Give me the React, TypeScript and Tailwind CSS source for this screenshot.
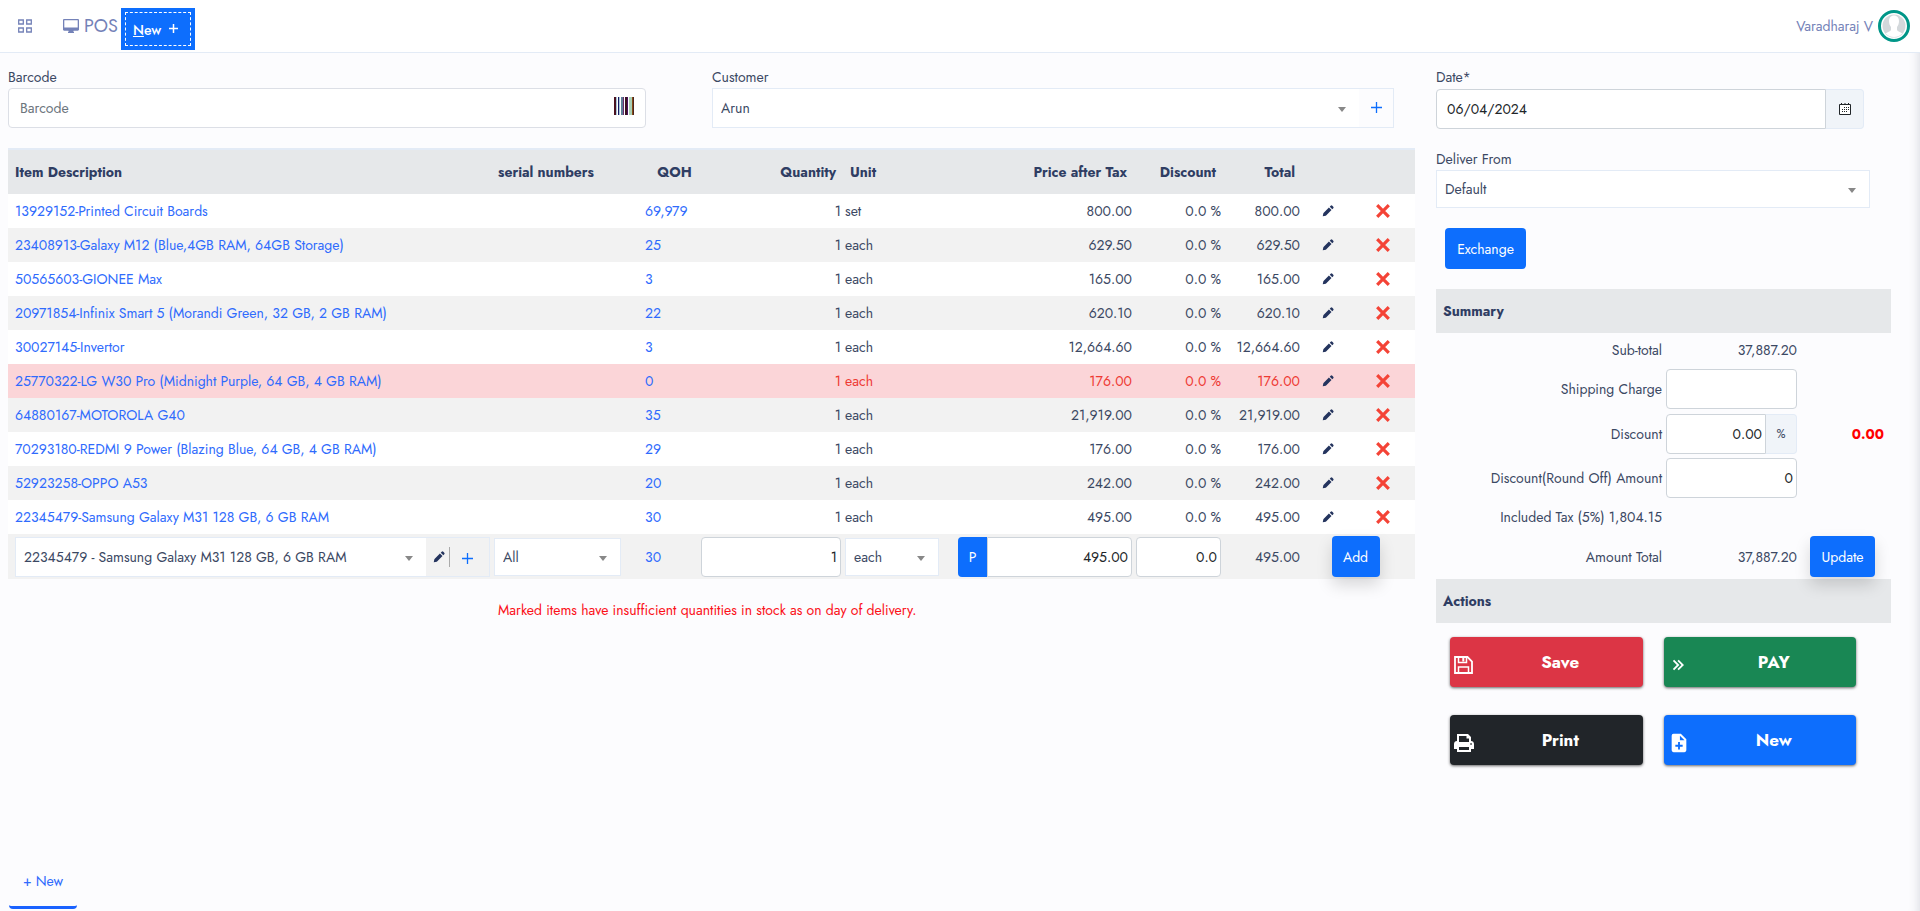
import type { ReactNode } from "react";
import { BiChevronsRight, BiSolidFilePlus, BiSolidPencil } from "react-icons/bi";

type Item = {
  name: string;
  qoh: string;
  unit: string;
  price: string;
  tone: "plain" | "stripe" | "short";
};

const items: Item[] = [
  { name: "13929152-Printed Circuit Boards", qoh: "69,979", unit: "set", price: "800.00", tone: "plain" },
  { name: "23408913-Galaxy M12 (Blue,4GB RAM, 64GB Storage)", qoh: "25", unit: "each", price: "629.50", tone: "stripe" },
  { name: "50565603-GIONEE Max", qoh: "3", unit: "each", price: "165.00", tone: "plain" },
  { name: "20971854-Infinix Smart 5 (Morandi Green, 32 GB, 2 GB RAM)", qoh: "22", unit: "each", price: "620.10", tone: "stripe" },
  { name: "30027145-Invertor", qoh: "3", unit: "each", price: "12,664.60", tone: "plain" },
  { name: "25770322-LG W30 Pro (Midnight Purple, 64 GB, 4 GB RAM)", qoh: "0", unit: "each", price: "176.00", tone: "short" },
  { name: "64880167-MOTOROLA G40", qoh: "35", unit: "each", price: "21,919.00", tone: "stripe" },
  { name: "70293180-REDMI 9 Power (Blazing Blue, 64 GB, 4 GB RAM)", qoh: "29", unit: "each", price: "176.00", tone: "plain" },
  { name: "52923258-OPPO A53", qoh: "20", unit: "each", price: "242.00", tone: "stripe" },
  { name: "22345479-Samsung Galaxy M31 128 GB, 6 GB RAM", qoh: "30", unit: "each", price: "495.00", tone: "plain" },
];

const rowTone = {
  plain: "bg-white",
  stripe: "bg-[#f2f2f2]",
  short: "bg-[#fbd5d8] text-[#ee3a33]",
};

const field = "h-10 min-w-0 border border-[#ced4da] bg-white text-[#212529] outline-none";

function Picker({ id, label, value, className }: { id: string; label?: string; value: string; className: string }) {
  return (
    <div className={`relative ${className}`}>
      <select
        id={id}
        aria-label={label}
        defaultValue={value}
        className="h-full w-full appearance-none bg-white pr-8 pl-2 outline-none"
      >
        <option>{value}</option>
      </select>
      <svg viewBox="0 0 8 5" className="pointer-events-none absolute top-1/2 right-[13px] -mt-px h-[5px] w-2 fill-[#888]">
        <path d="M0 0h8L4 5z" />
      </svg>
    </div>
  );
}

function PlusIcon() {
  return (
    <svg viewBox="0 0 11 11" className="size-[11px]" stroke="currentColor" strokeWidth="1.3" fill="none">
      <path d="M5.500 0v11M0 5.500h11" />
    </svg>
  );
}

function GridIcon() {
  return (
    <svg viewBox="0 0 14 14" className="size-3.5" stroke="currentColor" strokeWidth="1.3" fill="none">
      <path d="M.7 1h4.600v4H.7zM8.700 1h4.600v4H8.700zM.7 9h4.600v4H.7zM8.700 9h4.600v4H8.700z" />
    </svg>
  );
}

function MonitorIcon() {
  return (
    <svg viewBox="0 0 16 14" className="h-3.5 w-4">
      <path
        fill="currentColor"
        fillRule="evenodd"
        d="M1.200 0h13.600C15.500 0 16 .5 16 1.200v9.300c0 .7-.5 1.200-1.200 1.200H10.500V13h.5v1H5v-1h.5v-1.300H1.200C.5 11.700 0 11.200 0 10.500V1.200C0 .5.5 0 1.200 0zM1.300 1.200v7.300h13.400V1.200z"
      />
    </svg>
  );
}

function SaveIcon() {
  return (
    <svg viewBox="0 0 19 18" className="h-[18px] w-[19px]" stroke="currentColor" strokeWidth="1.800" fill="none">
      <path d="M1 1h12.500L18 5.500V17H1z" />
      <path d="M4.500 1v5.500h8V1M4.500 17v-6h10v6" strokeWidth="1.500" />
      <path d="M9.300 1.500v4" strokeWidth="2" />
    </svg>
  );
}

function PrinterIcon() {
  return (
    <svg viewBox="0 0 20 18" className="h-[18px] w-5">
      <path
        fill="currentColor"
        fillRule="evenodd"
        d="M3 0h11l3 3v4c1.700 0 3 1.300 3 3v5h-3v3H3v-3H0v-5c0-1.700 1.300-3 3-3zM5 2v6h10V4.500h-2.500V2zM5 13v3h10v-3zM16.300 9.200v1.500h1.500V9.200z"
      />
    </svg>
  );
}

function CrossIcon() {
  return (
    <svg viewBox="0 0 14 14" className="size-3.5" stroke="#f44336" strokeWidth="3.2" fill="none">
      <path d="M1.2 1.2l11.6 11.6M12.8 1.2L1.2 12.8" />
    </svg>
  );
}

function BarcodeIcon() {
  return (
    <svg viewBox="0 0 21 18" className="mb-1 h-[18px] w-[21px]" shapeRendering="crispEdges">
      <path fill="#4a1220" d="M0 0h2v18H0z" />
      <path fill="#151a66" d="M4 0h1v18H4z" />
      <path fill="#a9c4d4" d="M2 0h1v18H2zM5 0h1v18H5z" />
      <path fill="#5f7f98" d="M7 0h2v18H7z" />
      <path fill="#6a2a6a" d="M9 0h1v18H9z" />
      <path fill="#3a1020" d="M11 0h2v18h-2z" />
      <path fill="#4a1260" d="M13 0h1v18h-1z" />
      <path fill="#a9cfb5" d="M15 0h3v18h-3z" />
      <path fill="#8a4a14" d="M18 0h1v18h-1z" />
      <path fill="#4a2420" d="M19 0h1v18h-1z" />
    </svg>
  );
}

function CalendarIcon() {
  return (
    <svg viewBox="0 0 12 12" className="size-3" fill="#212529">
      <path d="M.5 1.5h11v10H.5z" fill="#fff" stroke="#212529" />
      <path d="M2 0h1v2H2zM5.500 0h1v2h-1zM9 0h1v2H9z" />
      <path d="M5 4h1v1H5zM7 4h1v1H7zM9 4h1v1H9zM3 6h1v1H3zM5 6h1v1H5zM7 6h1v1H7zM9 6h1v1H9zM3 8h1v1H3zM5 8h1v1H5zM7 8h1v1H7z" />
    </svg>
  );
}

function Avatar() {
  return (
    <svg viewBox="0 0 32 32" className="size-8">
      <circle cx="16" cy="16" r="14.5" fill="#fff" stroke="#009688" strokeWidth="3" />
      <circle cx="16" cy="16" r="11.500" fill="#d3d8db" />
      <path
        d="M16 5.500c3.200 0 5 2.300 5 5.600 0 2.600-.8 4.600-2 5.900v3c.6 1.500 3.500 2.300 5.300 3.400A11.500 11.500 0 0 1 7.700 23.400c1.800-1.100 4.700-1.900 5.300-3.400v-3c-1.200-1.300-2-3.300-2-5.900 0-3.300 1.800-5.600 5-5.600z"
        fill="#fff"
      />
    </svg>
  );
}

function PanelHeading({ children }: { children: ReactNode }) {
  return <h2 className="flex h-11 items-center bg-[#e6e8ea] px-[7px] font-bold text-[#2f3d63]">{children}</h2>;
}

function ActionButton({ icon, label, color }: { icon: ReactNode; label: string; color: string }) {
  return (
    <button className={`flex h-[50px] items-center rounded pl-1 text-white shadow-[0_1px_3px_rgba(0,0,0,0.6)] ${color}`}>
      <span className="flex w-6 shrink-0 justify-start pt-1.5 text-[22px]">{icon}</span>
      <span className="flex-1 text-[17px] font-bold">{label}</span>
    </button>
  );
}

export default function App() {
  return (
    <div className="flex min-h-screen flex-col bg-[#fcfcfe] font-['Jost','Lato',sans-serif] text-sm text-[#3b4863]">
      <header className="flex h-[53px] items-center border-b border-[#e3ebf6] bg-white pr-2.5 pl-[18px] text-[#7482b8]">
        <button aria-label="Menu">
          <GridIcon />
        </button>
        <div className="ml-[31px] flex items-center gap-[5px]">
          <MonitorIcon />
          <span className="text-lg">POS</span>
        </div>
        <button className="mt-1.5 ml-[3px] h-[42px] bg-[#0d6efd] p-1 text-white">
          <span className="flex h-full items-center gap-2 border border-dashed border-white pr-3 pl-[7px] font-medium">
            <span className="pt-0.5">
              <span className="underline">N</span>ew
            </span>
            <svg viewBox="0 0 9 9" className="mb-0.5 size-[9px]" stroke="currentColor" strokeWidth="1.500">
              <path d="M4.500 0v9M0 4.500h9" />
            </svg>
          </span>
        </button>
        <div className="ml-auto flex items-center gap-[5px]">
          <span>Varadharaj V</span>
          <Avatar />
        </div>
      </header>

      <div className="flex flex-1 shadow-[inset_-12px_0_12px_-12px_rgba(40,50,80,0.2)]">
        <main className="flex min-w-0 flex-1 flex-col pl-2">
          <div className="grid grid-cols-[29fr_31fr] gap-x-[66px] pt-3.5 pr-[21px]">
            <div>
              <label htmlFor="barcode" className="block h-[21px]">
                Barcode
              </label>
              <div className="flex h-10 items-center rounded border border-[#dcdfe6] bg-white pr-2.5">
                <input id="barcode" placeholder="Barcode" className="h-full min-w-0 flex-1 bg-transparent pl-[11px] outline-none placeholder:text-[#6c757d]" />
                <BarcodeIcon />
              </div>
            </div>
            <div>
              <label htmlFor="customer" className="block h-[21px]">
                Customer
              </label>
              <div className="flex h-10 border border-[#e3ebf6]">
                <Picker id="customer" value="Arun" className="flex-1" />
                <button aria-label="Add customer" className="flex w-[34px] items-center justify-center pb-0.5 text-[#0d6efd]">
                  <PlusIcon />
                </button>
              </div>
            </div>
          </div>

          <table className="mt-5 w-full table-fixed">
            <colgroup>
              <col />
              <col className="w-[152px]" />
              <col className="w-[55px]" />
              <col className="w-36" />
              <col className="w-[113px]" />
              <col className="w-[178px]" />
              <col className="w-[89px]" />
              <col className="w-[79px]" />
              <col className="w-[52px]" />
              <col className="w-[61px]" />
            </colgroup>
            <thead className="border-t-2 border-[#e3ebf6] bg-[#e6e8ea] text-[#2f3d63]">
              <tr className="h-[45px]">
                <th className="pl-[7px] text-left">Item Description</th>
                <th className="pl-1.5 text-left">serial numbers</th>
                <th className="pl-1.5 text-center">QOH</th>
                <th className="pr-[7px] text-right">Quantity</th>
                <th className="pl-[7px] text-left">Unit</th>
                <th className="pr-[7px] text-right">Price after Tax</th>
                <th className="pr-[7px] text-right">Discount</th>
                <th className="pr-[7px] text-right">Total</th>
                <th />
                <th />
              </tr>
            </thead>
            <tbody>
              {items.map((item) => (
                <tr key={item.name} className={`h-[34px] ${rowTone[item.tone]}`}>
                  <td className="pl-[7px] text-[#2f6bfd]">{item.name}</td>
                  <td />
                  <td className="pl-px text-[#2f6bfd]">{item.qoh}</td>
                  <td className="pr-0.5 text-right">1</td>
                  <td className="pl-0.5">{item.unit}</td>
                  <td className="pr-0.5 text-right">{item.price}</td>
                  <td className="pr-0.5 text-right">0.0 %</td>
                  <td className="pr-0.5 text-right">{item.price}</td>
                  <td>
                    <button aria-label="Edit item" className="mx-auto flex text-sm text-[#24345e]">
                      <BiSolidPencil />
                    </button>
                  </td>
                  <td className="pr-1">
                    <button aria-label="Remove item" className="mx-auto flex">
                      <CrossIcon />
                    </button>
                  </td>
                </tr>
              ))}
              <tr className="h-[45px] bg-[#f2f2f2]">
                <td className="pr-0.5 pl-[7px]">
                  <div className="flex h-10 border border-[#e3ebf6]">
                    <Picker id="new-item" label="Item" value="22345479 - Samsung Galaxy M31 128 GB, 6 GB RAM" className="flex-1" />
                    <div className="flex w-[63px] items-center pl-1.5 text-[#24345e]">
                      <button aria-label="Edit selected item" className="h-5 border-r border-[#aaa] pr-[3px]">
                        <BiSolidPencil />
                      </button>
                      <button aria-label="Add new item" className="flex flex-1 justify-center pt-1 pr-1 text-[#0d6efd]">
                        <PlusIcon />
                      </button>
                    </div>
                  </div>
                </td>
                <td className="px-0.5">
                  <Picker id="serial" label="Serial numbers" value="All" className="h-[38px] w-[127px] border border-[#e3ebf6]" />
                </td>
                <td className="pl-px text-[#2f6bfd]">30</td>
                <td className="px-0.5">
                  <input aria-label="Quantity" defaultValue="1" className={`${field} w-full rounded pr-[3px] text-right`} />
                </td>
                <td className="px-0.5">
                  <Picker id="unit" label="Unit" value="each" className="h-[38px] w-[94px] border border-[#e3ebf6]" />
                </td>
                <td className="px-0.5">
                  <div className="flex">
                    <button className="w-[29px] rounded-l bg-[#0d6efd] text-white">P</button>
                    <input aria-label="Price" defaultValue="495.00" className={`${field} flex-1 rounded-r pr-[3px] text-right`} />
                  </div>
                </td>
                <td className="px-0.5">
                  <input aria-label="Discount percent" defaultValue="0.0" className={`${field} w-full rounded pr-[3px] text-right`} />
                </td>
                <td className="pr-0.5 text-right">495.00</td>
                <td colSpan={2} className="pr-1.5">
                  <button className="mx-auto block h-[41px] w-12 rounded bg-[#0d6efd] text-white shadow-[0_8px_16px_rgba(0,0,0,0.15)]">Add</button>
                </td>
              </tr>
            </tbody>
          </table>
          <p className="mt-5 pl-[490px] leading-[22px] text-[#fb1018]">
            Marked items have insufficient quantities in stock as on day of delivery.
          </p>

          <footer className="mt-auto flex pb-0.5 pl-px">
            <a href="#new" className="flex h-11 w-[68px] justify-center rounded-b-sm border-b-3 border-[#1a62ff] pt-1.5 text-[#2f6bfd]">
              + New
            </a>
          </footer>
        </main>

        <aside className="mr-[29px] ml-[21px] w-[455px] shrink-0 pt-3.5">
          <label htmlFor="date" className="block h-[22px]">
            Date*
          </label>
          <div className="mr-[27px] flex">
            <input id="date" defaultValue="06/04/2024" className={`${field} flex-1 rounded-l pl-2.5`} />
            <button
              aria-label="Open calendar"
              className="flex w-[38px] items-center justify-center rounded-r border border-l-0 border-[#e3ebf6] bg-[#f0f4f9]"
            >
              <CalendarIcon />
            </button>
          </div>
          <label htmlFor="deliver" className="mt-5 block h-[21px]">
            Deliver From
          </label>
          <Picker id="deliver" value="Default" className="mr-[21px] h-[38px] border border-[#e3ebf6]" />
          <button className="mt-5 mb-5 ml-[9px] h-[41px] w-[81px] rounded bg-[#0d6efd] text-white">Exchange</button>

          <PanelHeading>Summary</PanelHeading>
          <div className="grid grid-cols-[1fr_131px_94px] items-center">
            <span className="h-[34px] pt-[7px] pr-1 text-right leading-5">Sub-total</span>
            <span className="h-[34px] pt-[7px] text-right leading-5">37,887.20</span>
            <span />

            <label htmlFor="shipping" className="pr-1 text-right">
              Shipping Charge
            </label>
            <input id="shipping" className={`${field} my-0.5 rounded`} />
            <span />

            <label htmlFor="discount" className="pr-1 text-right">
              Discount
            </label>
            <div className="mt-[3px] mb-0.5 flex">
              <input id="discount" defaultValue="0.00" className={`${field} flex-1 rounded-l pr-[3px] text-right`} />
              <span className="flex w-[31px] items-center justify-center rounded-r border border-l-0 border-[#e3ebf6] bg-[#f0f4f9] text-xs">
                %
              </span>
            </div>
            <span className="pr-[7px] text-right font-bold text-[#ff0000]">0.00</span>

            <label htmlFor="roundoff" className="pr-1 text-right">
              Discount(Round Off) Amount
            </label>
            <input id="roundoff" defaultValue="0" className={`${field} my-0.5 rounded pr-[3px] text-right`} />
            <span />

            <span className="h-9 pt-[7px] pr-1 text-right leading-5">Included Tax (5%) 1,804.15</span>
            <span />
            <span />

            <span className="pr-1 pb-0.5 text-right">Amount Total</span>
            <span className="pb-0.5 text-right">37,887.20</span>
            <button className="mb-0.5 ml-[13px] h-[41px] w-[65px] rounded bg-[#0d6efd] text-white shadow-[0_8px_16px_rgba(0,0,0,0.15)]">
              Update
            </button>
          </div>

          <PanelHeading>Actions</PanelHeading>
          <div className="mt-3.5 mr-[35px] ml-3.5 grid grid-cols-2 gap-x-[21px] gap-y-7">
            <ActionButton icon={<SaveIcon />} label="Save" color="bg-[#dc3545]" />
            <ActionButton icon={<BiChevronsRight />} label="PAY" color="bg-[#198754]" />
            <ActionButton icon={<PrinterIcon />} label="Print" color="bg-[#212529]" />
            <ActionButton icon={<BiSolidFilePlus />} label="New" color="bg-[#0d6efd]" />
          </div>
        </aside>
      </div>
    </div>
  );
}
